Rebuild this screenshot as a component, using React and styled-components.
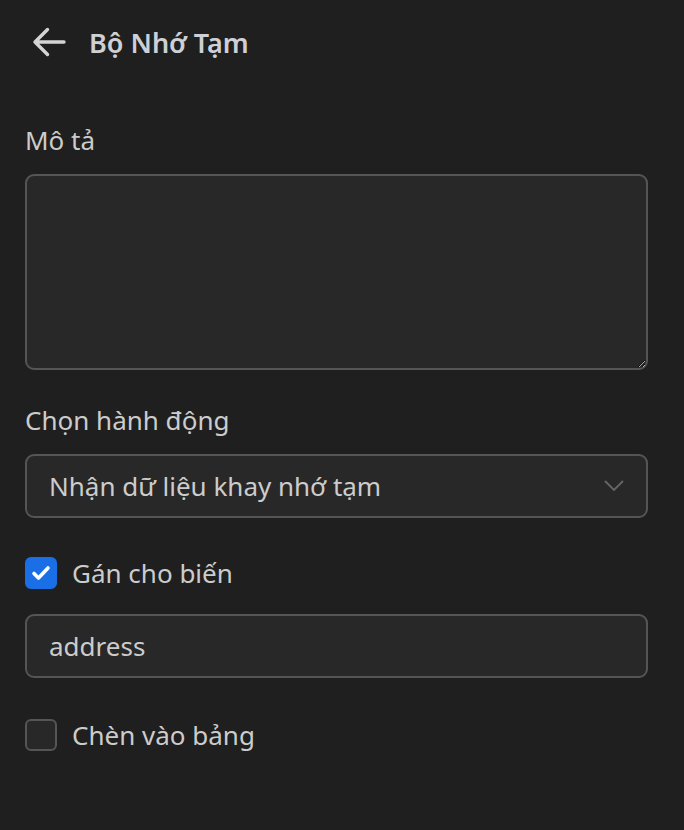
import React, { useState } from "react";
import styled, { createGlobalStyle } from "styled-components";

const GlobalStyle = createGlobalStyle`
  html, body {
    margin: 0;
    padding: 0;
    background: #1f1f1f;
  }
  body {
    font-family: "Noto Sans", "Open Sans", sans-serif;
    color: #cccccc;
  }
`;

const Page = styled.div`
  min-height: 830px;
  box-sizing: border-box;
  padding: 22px 36px 0 25px;
  display: flex;
  flex-direction: column;
`;

const Header = styled.div`
  display: flex;
  align-items: center;
  gap: 23px;
  height: 40px;
  padding-left: 7px;
`;

const BackButton = styled.button`
  background: none;
  border: none;
  padding: 0;
  display: flex;
  color: #d4d4d4;
  cursor: pointer;
`;

const Title = styled.h1`
  margin: 0;
  font-size: 27px;
  font-weight: 600;
  color: #cdd0d6;
`;

const Label = styled.div`
  font-size: 26px;
  color: #cccccc;
  margin-top: ${(p) => p.$top}px;
  margin-bottom: 17px;
  line-height: 34px;
`;

const TextArea = styled.textarea`
  box-sizing: border-box;
  width: 100%;
  height: 196px;
  background: #282828;
  border: 2px solid #555555;
  border-radius: 9px;
  color: #cccccc;
  font: inherit;
  font-size: 26px;
  padding: 12px 22px;
  outline: none;
  resize: vertical;
  display: block;
`;

const Field = styled.div`
  box-sizing: border-box;
  width: 100%;
  height: 64px;
  background: #282828;
  border: 2px solid #555555;
  border-radius: 9px;
  display: flex;
  align-items: center;
  padding: 0 22px;
  font-size: 26px;
  color: #cccccc;
  margin-top: ${(p) => p.$top || 0}px;
`;

const FieldText = styled.span`
  flex: 1;
`;

const CheckRow = styled.label`
  display: flex;
  align-items: center;
  gap: 15px;
  font-size: 26px;
  color: #cccccc;
  margin-top: ${(p) => p.$top}px;
  cursor: pointer;
`;

const Box = styled.span`
  width: 32px;
  height: 32px;
  box-sizing: border-box;
  border-radius: 6px;
  display: flex;
  align-items: center;
  justify-content: center;
  background: ${(p) => (p.$checked ? "#1a6fe6" : "#282828")};
  border: 2px solid ${(p) => (p.$checked ? "#1a6fe6" : "#555555")};
`;

const Checkbox = ({ checked, label, top, onToggle }) => (
  <CheckRow $top={top} onClick={onToggle}>
    <Box $checked={checked}>
      {checked && (
        <svg width="22" height="22" viewBox="0 0 22 22">
          <path
            d="M4 11.5l4.5 4.5L18 6"
            fill="none"
            stroke="#ffffff"
            strokeWidth="3.6"
            strokeLinecap="round"
            strokeLinejoin="round"
          />
        </svg>
      )}
    </Box>
    {label}
  </CheckRow>
);

export default function App() {
  const [assign, setAssign] = useState(true);
  const [insert, setInsert] = useState(false);

  return (
    <>
      <GlobalStyle />
      <Page>
        <Header>
          <BackButton>
            <svg width="34" height="32" viewBox="0 0 34 32">
              <path
                d="M32 16H3M15.5 3.5L3 16l12.5 12.5"
                fill="none"
                stroke="currentColor"
                strokeWidth="3.4"
                strokeLinecap="round"
                strokeLinejoin="round"
              />
            </svg>
          </BackButton>
          <Title>Bộ Nhớ Tạm</Title>
        </Header>

        <Label $top={61}>Mô tả</Label>
        <TextArea />

        <Label $top={33}>Chọn hành động</Label>
        <Field>
          <FieldText>Nhận dữ liệu khay nhớ tạm</FieldText>
          <svg width="20" height="12" viewBox="0 0 20 12">
            <path d="M1 1l9 9 9-9" fill="none" stroke="#666666" strokeWidth="1.8" />
          </svg>
        </Field>

        <Checkbox
          checked={assign}
          label="Gán cho biến"
          top={37}
          onToggle={() => setAssign((v) => !v)}
        />
        <Field $top={23}>
          <FieldText>address</FieldText>
        </Field>

        <Checkbox
          checked={insert}
          label="Chèn vào bảng"
          top={39}
          onToggle={() => setInsert((v) => !v)}
        />
      </Page>
    </>
  );
}
